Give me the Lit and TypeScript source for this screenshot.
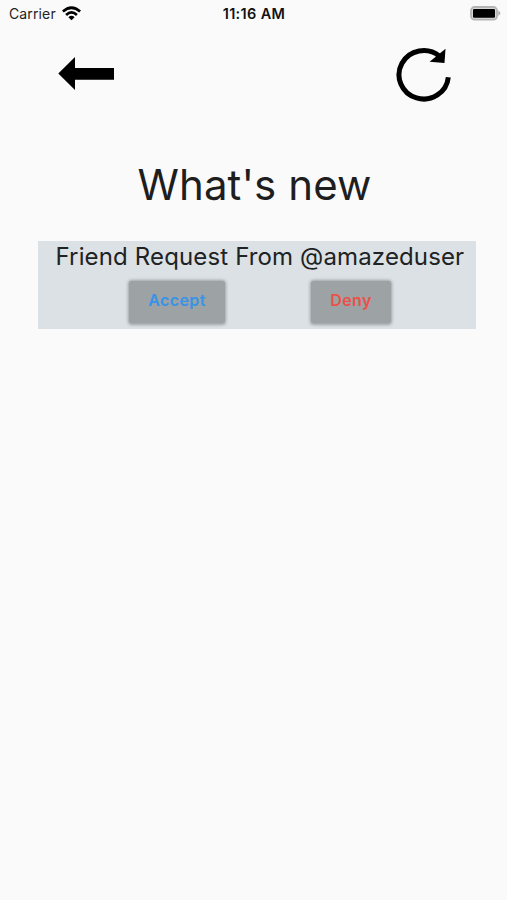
import { LitElement, html, css } from "lit";
import { customElement, property } from "lit/decorators.js";

@customElement("status-bar")
class StatusBar extends LitElement {
  static styles = css`
    :host {
      display: grid;
      grid-template-columns: 1fr auto 1fr;
      align-items: center;
      height: 26px;
      padding: 0 6px 0 9px;
      box-sizing: border-box;
      font-size: 14px;
      color: #222;
    }
    .carrier { display: flex; align-items: center; gap: 6px; letter-spacing: 0.13px; }
    .time { margin-right: 2px; font-weight: 600; font-size: 14.5px; color: #111; letter-spacing: 0.35px; }
    .battery { display: flex; justify-content: flex-end; }
    svg { display: block; }
  `;
  render() {
    return html`
      <div class="carrier">
        <span>Carrier</span>
        <svg width="19" height="15" viewBox="0 0 19 15" fill="none" stroke="#000" stroke-width="2.7">
          <path d="M0.9 5.6 Q9.5 -2.1 18.1 5.6" />
          <path d="M4.1 9 Q9.5 3.9 14.9 9" />
          <path d="M6.4 11.2 Q9.5 8.4 12.6 11.2 L9.5 14.3Z" fill="#000" stroke="none" />
        </svg>
      </div>
      <div class="time">11:16 AM</div>
      <div class="battery">
        <svg width="31" height="15" viewBox="0 0 31 15">
          <rect x="1" y="1" width="26" height="12.6" rx="3.6" fill="#d8d8d8" stroke="#b4b4b4" stroke-width="1.8" />
          <rect x="3" y="3.1" width="22" height="8.6" rx="1.2" fill="#000" />
          <path d="M28.3 4.6 Q32.2 7.3 28.3 10Z" fill="#aaa" />
        </svg>
      </div>
    `;
  }
}

@customElement("request-card")
class RequestCard extends LitElement {
  @property() user = "";
  static styles = css`
    :host {
      display: block;
      box-sizing: border-box;
      height: 88px;
      background: #dbe1e4;
      color: #202224;
    }
    .message {
      padding: 1px 0 0 17.5px;
      font-size: 24px;
      line-height: 30px;
      letter-spacing: 0.14px;
      white-space: nowrap;
    }
    .actions {
      display: flex;
      gap: 86px;
      padding: 9px 0 0 91px;
    }
    button {
      height: 42px;
      padding: 0 0 5px;
      border: 0;
      border-radius: 3px;
      background: #9da2a4;
      box-shadow: 0 0.5px 3px 1px rgba(80, 88, 92, 0.45);
      font: 600 16px/20px Inter, sans-serif;
      letter-spacing: 0.42px;
    }
    .accept { width: 96px; color: #3693e8; }
    .deny { width: 80px; color: #ea5148; }
  `;
  render() {
    return html`
      <div class="message">Friend Request From @${this.user}</div>
      <div class="actions">
        <button class="accept">Accept</button>
        <button class="deny">Deny</button>
      </div>
    `;
  }
}

@customElement("app-root")
class AppRoot extends LitElement {
  static styles = css`
    :host {
      display: block;
      height: 900px;
      background: #fafafa;
      font-family: Inter, sans-serif;
    }
    .toolbar {
      display: flex;
      justify-content: space-between;
      height: 84px;
      padding: 20px 54px 0 56px;
      box-sizing: border-box;
    }
    svg { display: block; }
    .title {
      margin: 45px 0 0;
      padding-left: 2px;
      height: 60px;
      line-height: 60px;
      text-align: center;
      font-size: 42px;
      font-weight: 400;
      letter-spacing: 0.1px;
      color: #1e1e1e;
    }
    request-card { margin: 26px 31px 0 38px; }
  `;
  render() {
    return html`
      <status-bar></status-bar>
      <nav class="toolbar">
        <svg width="60" height="60" viewBox="56 46 60 60">
          <path d="M58.3 73.6 L75 57 V68 H114 V79.7 H75 V90Z" />
        </svg>
        <svg width="59" height="60" viewBox="394 46 59 60">
          <path d="M448.3 77.2 A24.7 24.2 0 1 1 439.5 56.2" fill="none" stroke="#000" stroke-width="5" />
          <path d="M445.5 48.7 L444.5 63 L429.6 61.8Z" />
        </svg>
      </nav>
      <h1 class="title">What's new</h1>
      <request-card user="amazeduser"></request-card>
    `;
  }
}
